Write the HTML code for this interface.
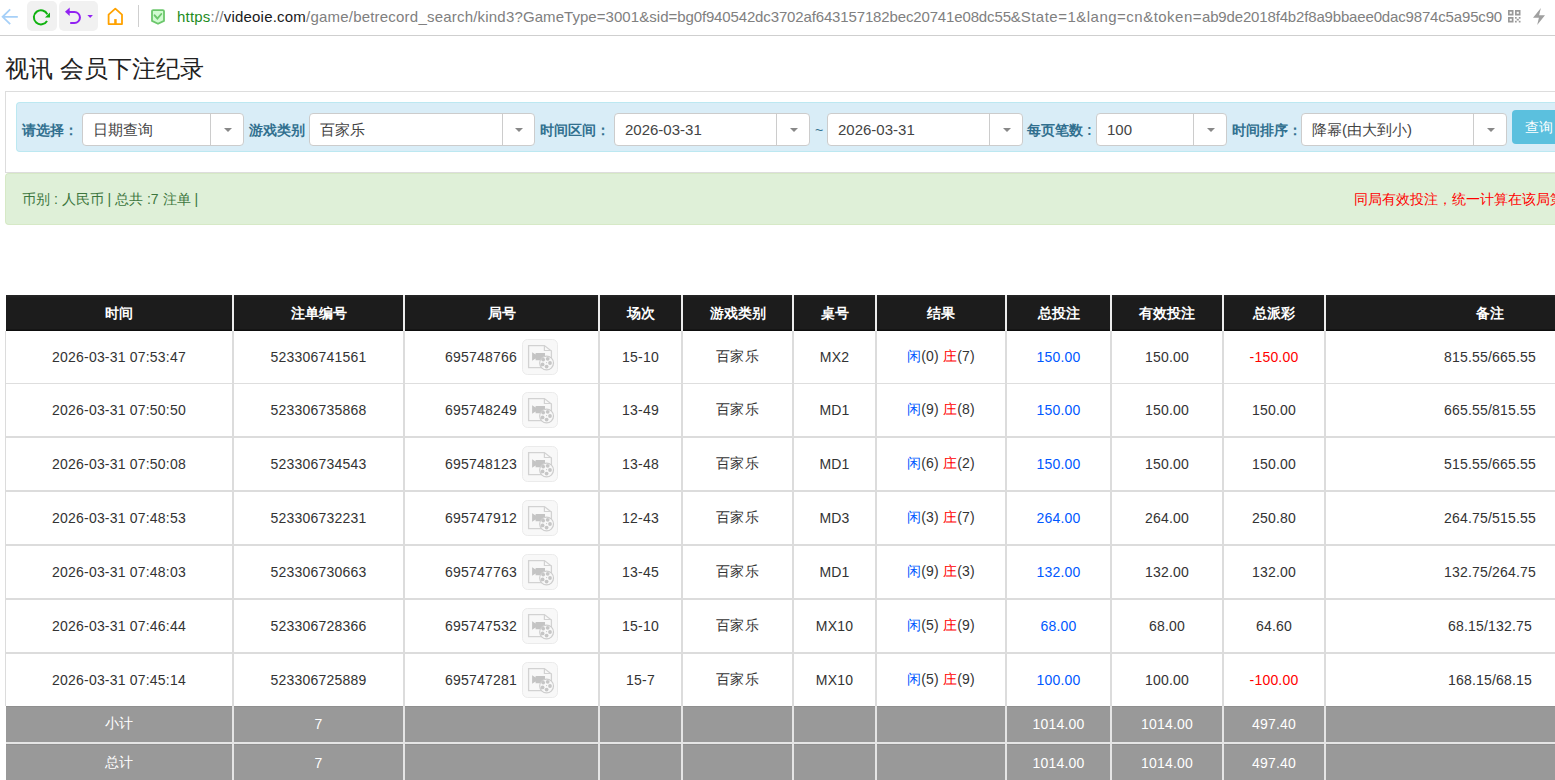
<!DOCTYPE html>
<html><head><meta charset="utf-8">
<style>
*{box-sizing:border-box;}
html,body{margin:0;padding:0;}
body{width:1555px;height:780px;overflow:hidden;position:relative;background:#fff;font-family:"Liberation Sans",sans-serif;color:#333;}
.abs{position:absolute;}
/* toolbar */
#tb{left:0;top:0;width:1555px;height:36px;border-bottom:1px solid #cfcfcf;background:#fff;}
.btnbg{position:absolute;background:#f1f1f1;border-radius:5px;}
#url{position:absolute;left:177px;top:8px;font-size:15px;white-space:nowrap;color:#808080;letter-spacing:0.05px;}
#url>span{position:absolute;top:0;}
#url .g{color:#1e8c1e;}
#url .k{color:#1a1a1a;}
/* title */
#title{left:5px;top:53px;font-size:24px;color:#222;white-space:nowrap;}
/* panel */
#panel{left:5px;top:91px;width:1560px;height:82px;border:1px solid #ddd;border-right:none;background:#fff;}
#bar{left:16px;top:102px;width:1560px;height:50px;background:#d9edf7;border:1px solid #bce8f1;border-right:none;border-radius:4px 0 0 4px;}
.lbl{position:absolute;top:122px;font-size:14px;font-weight:bold;color:#31708f;white-space:nowrap;}
.sel{position:absolute;top:113px;height:33px;background:#fff;border:1px solid #ccc;border-radius:4px;}
.sel .t{position:absolute;left:10px;top:7px;font-size:15px;color:#444;white-space:nowrap;}
.sel .d{position:absolute;top:0;bottom:0;width:1px;background:#ccc;}
.sel .ar{position:absolute;top:14px;width:0;height:0;border-left:4px solid transparent;border-right:4px solid transparent;border-top:4px solid #888;}
#qbtn{left:1512px;top:110px;width:60px;height:34px;background:#5bc0de;border-radius:4px;color:#fff;font-size:14px;}
/* alert */
#alert{left:5px;top:173px;width:1560px;height:52px;background:#dff0d8;border:1px solid #d6e9c6;border-right:none;border-radius:4px 0 0 4px;}
#alert .l{position:absolute;left:16px;top:17px;font-size:14px;color:#3c763d;white-space:nowrap;}
#alert .r{position:absolute;left:1348px;top:17px;font-size:14px;color:#f00;white-space:nowrap;}
/* table */
#tbl{position:absolute;left:6px;top:295px;border-collapse:separate;border-spacing:0;table-layout:fixed;width:1650px;}
#tbl td,#tbl th{text-align:center;padding:0;white-space:nowrap;overflow:hidden;border:0;border-right:2px solid #dcdcdc;}
#tbl th{background:linear-gradient(#262626,#1c1c1c 3px,#1c1c1c 34px,#0e0e0e 35px);color:#fff;font-size:14px;height:36px;border-right-color:#ececec;padding-top:2px;}
#tbl td{font-size:14px;color:#333;height:54px;border-bottom:2px solid #dcdcdc;letter-spacing:0.2px;}
#tbl tr.r1 td{height:53px;border-bottom-width:1px;border-bottom-color:#dedede;}
#tbl tr.r7 td{height:52px;border-bottom:none;}
#tbl td:first-child{box-shadow:-1px 0 0 #dcdcdc;}
#tbl tr.f td{background:#999;box-shadow:inset 0 1px 0 #8f8f8f;color:#fff;height:38px;border-bottom:2px solid #e5e5e5;border-right-color:#e5e5e5;}
#tbl tr.f2 td{height:38px;border-bottom:none;}
.blue{color:#0058ff !important;}
.red{color:#ff0000 !important;}
.jn{position:relative;top:1px;}
.vid{display:inline-block;vertical-align:middle;width:36px;height:36px;margin-left:5px;position:relative;}
</style></head><body>

<div id="tb" class="abs">
  <!-- back arrow -->
  <svg class="abs" style="left:0;top:0" width="24" height="34"><path d="M2.6 16.8H17.8M10.2 9.4L2.6 16.8L10.2 24.2" fill="none" stroke="#a6d0f8" stroke-width="1.8"/></svg>
  <div class="btnbg" style="left:27px;top:1px;width:30px;height:30px"></div>
  <svg class="abs" style="left:27px;top:1px" width="30" height="30"><path d="M20.05 19.95A7.1 7.1 0 1 1 20.4 13.3" fill="none" stroke="#0fb20f" stroke-width="2"/><path d="M23 11.6V16.4H18Z" fill="#0fb20f"/></svg>
  <div class="btnbg" style="left:59px;top:1px;width:39px;height:30px"></div>
  <svg class="abs" style="left:59px;top:1px" width="39" height="30"><path d="M10 11H15.45A5.5 5.5 0 0 1 15.45 22H11.2" fill="none" stroke="#9222f2" stroke-width="2"/><path d="M6 10.8L10.7 6.6V15Z" fill="#9222f2"/><path d="M28.4 14H33.9L31.15 16.9Z" fill="#9222f2"/></svg>
  <svg class="abs" style="left:105px;top:6px" width="22" height="22"><path d="M3.6 18.1V8.6L10.3 2.6L17 8.6V18.1Z" fill="none" stroke="#ffa200" stroke-width="1.8" stroke-linejoin="round"/><rect x="9.2" y="13.1" width="2.5" height="5" fill="#ffa200"/></svg>
  <div class="abs" style="left:138px;top:5px;width:1px;height:22px;background:#cfcfcf"></div>
  <svg class="abs" style="left:149px;top:7px" width="19" height="20"><path d="M4.2 3.1H13.8Q15 3.1 15 4.3V13.9L9 16.8L3 13.9V4.3Q3 3.1 4.2 3.1Z" fill="#d2fbd2" stroke="#6cc76c" stroke-width="1.8" stroke-linejoin="round"/><path d="M5.6 8.3L8.4 11.5L12.3 7" fill="none" stroke="#6cc76c" stroke-width="1.9" stroke-linecap="round"/></svg>
  <div id="url"><span style="left:0;letter-spacing:0.208px"><span class="g">https</span>://<span class="k">videoie.com</span>/game/betrecord_search/kind3?</span><span style="left:346px;letter-spacing:0.05px">GameType=3001&amp;sid=</span><span style="left:500.3px;letter-spacing:-0.142px">bg0f940542dc3702af643157182bec20741e08dc55&amp;</span><span style="left:843.7px;letter-spacing:0.49px">State=1&amp;lang=cn&amp;token=</span><span style="left:1025px;letter-spacing:-0.16px">ab9de2018f4b2f8a9bbaee0dac9874c5a95c90</span></div>
  <svg class="abs" style="left:1506px;top:8px" width="18" height="18"><g fill="#999"><path d="M2 2h5.5v5.5H2zM3.7 3.7v2.1h2.1V3.7z" fill-rule="evenodd"/><path d="M9 2h5.5v5.5H9zM10.7 3.7v2.1h2.1V3.7z" fill-rule="evenodd"/><path d="M2 9h5.5v5.5H2zM3.7 10.7v2.1h2.1v-2.1z" fill-rule="evenodd"/><rect x="9" y="9" width="1.7" height="1.7"/><rect x="12.8" y="9" width="1.7" height="1.7"/><rect x="10.7" y="10.8" width="2.1" height="1.7"/><rect x="9" y="12.8" width="1.7" height="1.7"/><rect x="12.8" y="12.8" width="1.7" height="1.7"/></g></svg>
  <svg class="abs" style="left:1530px;top:6px" width="18" height="22"><path d="M10.9 2.1L3 11.8H8.9L7.2 19L15 9.2H9.1Z" fill="#a0a0a0"/></svg>
</div>

<div id="title" class="abs">视讯 会员下注纪录</div>

<div id="panel" class="abs"></div>
<div id="bar" class="abs"></div>

<div class="lbl" style="left:22px">请选择：</div>
<div class="sel" style="left:82px;width:162px"><span class="t">日期查询</span><span class="d" style="left:127px"></span><span class="ar" style="left:141px"></span></div>
<div class="lbl" style="left:249px">游戏类别</div>
<div class="sel" style="left:309px;width:226px"><span class="t">百家乐</span><span class="d" style="left:192px"></span><span class="ar" style="left:205px"></span></div>
<div class="lbl" style="left:540px">时间区间：</div>
<div class="sel" style="left:614px;width:196px"><span class="t">2026-03-31</span><span class="d" style="left:161px"></span><span class="ar" style="left:175px"></span></div>
<div class="lbl" style="left:815px;font-weight:normal">~</div>
<div class="sel" style="left:827px;width:196px"><span class="t">2026-03-31</span><span class="d" style="left:161px"></span><span class="ar" style="left:175px"></span></div>
<div class="lbl" style="left:1027px">每页笔数 :</div>
<div class="sel" style="left:1096px;width:131px"><span class="t">100</span><span class="d" style="left:96px"></span><span class="ar" style="left:110px"></span></div>
<div class="lbl" style="left:1232px">时间排序：</div>
<div class="sel" style="left:1301px;width:206px"><span class="t">降幂(由大到小)</span><span class="d" style="left:171px"></span><span class="ar" style="left:185px"></span></div>
<div id="qbtn" class="abs"><span style="position:absolute;left:13px;top:9px">查询</span></div>

<div id="alert" class="abs"><span class="l">币别 : 人民币 | 总共 :7 注单 |</span><span class="r">同局有效投注，统一计算在该局第一笔投注</span></div>

<table id="tbl">
<colgroup><col style="width:228px"><col style="width:171px"><col style="width:195px"><col style="width:83px"><col style="width:111px"><col style="width:83px"><col style="width:130px"><col style="width:105px"><col style="width:112px"><col style="width:102px"><col style="width:330px"></colgroup>
<tr><th>时间</th><th>注单编号</th><th>局号</th><th>场次</th><th>游戏类别</th><th>桌号</th><th>结果</th><th>总投注</th><th>有效投注</th><th>总派彩</th><th>备注</th></tr>
<tr class="r1"><td>2026-03-31 07:53:47</td><td>523306741561</td><td><span class="jn">695748766</span><span class="vid"><svg width="36" height="36" viewBox="0 0 36 36" style="display:block"><rect x="0.5" y="0.5" width="35" height="35" rx="5" fill="#f8f8f8" stroke="#ebebeb"/><path d="M6.6 6.6H22.4L29.4 12V28.6H6.6Z" fill="#f8f8f8" stroke="#d2d2d2" stroke-width="1.3"/><path d="M22.4 6.6V11.5H29.4" fill="none" stroke="#d2d2d2" stroke-width="1.2"/><path d="M10.1 13.2L13.6 15.6V14H23V21.2H13.6V19.4L10.1 21.8Z" fill="#c4c4c4"/><circle cx="24.6" cy="24" r="6.9" fill="#f8f8f8" stroke="#cdcdcd" stroke-width="1.2"/><g fill="#c6c6c6"><circle cx="21.2" cy="20.6" r="1.9"/><circle cx="25.7" cy="19.8" r="1.9"/><circle cx="28" cy="24" r="1.9"/><circle cx="24.6" cy="27.6" r="1.9"/><circle cx="20.6" cy="25.4" r="1.9"/><circle cx="24.6" cy="23.6" r="0.6"/></g></svg></span></td><td>15-10</td><td>百家乐</td><td>MX2</td><td><span class="blue">闲</span>(0) <span class="red">庄</span>(7)</td><td class="blue">150.00</td><td>150.00</td><td class="red">-150.00</td><td>815.55/665.55</td></tr>
<tr><td>2026-03-31 07:50:50</td><td>523306735868</td><td><span class="jn">695748249</span><span class="vid"><svg width="36" height="36" viewBox="0 0 36 36" style="display:block"><rect x="0.5" y="0.5" width="35" height="35" rx="5" fill="#f8f8f8" stroke="#ebebeb"/><path d="M6.6 6.6H22.4L29.4 12V28.6H6.6Z" fill="#f8f8f8" stroke="#d2d2d2" stroke-width="1.3"/><path d="M22.4 6.6V11.5H29.4" fill="none" stroke="#d2d2d2" stroke-width="1.2"/><path d="M10.1 13.2L13.6 15.6V14H23V21.2H13.6V19.4L10.1 21.8Z" fill="#c4c4c4"/><circle cx="24.6" cy="24" r="6.9" fill="#f8f8f8" stroke="#cdcdcd" stroke-width="1.2"/><g fill="#c6c6c6"><circle cx="21.2" cy="20.6" r="1.9"/><circle cx="25.7" cy="19.8" r="1.9"/><circle cx="28" cy="24" r="1.9"/><circle cx="24.6" cy="27.6" r="1.9"/><circle cx="20.6" cy="25.4" r="1.9"/><circle cx="24.6" cy="23.6" r="0.6"/></g></svg></span></td><td>13-49</td><td>百家乐</td><td>MD1</td><td><span class="blue">闲</span>(9) <span class="red">庄</span>(8)</td><td class="blue">150.00</td><td>150.00</td><td>150.00</td><td>665.55/815.55</td></tr>
<tr><td>2026-03-31 07:50:08</td><td>523306734543</td><td><span class="jn">695748123</span><span class="vid"><svg width="36" height="36" viewBox="0 0 36 36" style="display:block"><rect x="0.5" y="0.5" width="35" height="35" rx="5" fill="#f8f8f8" stroke="#ebebeb"/><path d="M6.6 6.6H22.4L29.4 12V28.6H6.6Z" fill="#f8f8f8" stroke="#d2d2d2" stroke-width="1.3"/><path d="M22.4 6.6V11.5H29.4" fill="none" stroke="#d2d2d2" stroke-width="1.2"/><path d="M10.1 13.2L13.6 15.6V14H23V21.2H13.6V19.4L10.1 21.8Z" fill="#c4c4c4"/><circle cx="24.6" cy="24" r="6.9" fill="#f8f8f8" stroke="#cdcdcd" stroke-width="1.2"/><g fill="#c6c6c6"><circle cx="21.2" cy="20.6" r="1.9"/><circle cx="25.7" cy="19.8" r="1.9"/><circle cx="28" cy="24" r="1.9"/><circle cx="24.6" cy="27.6" r="1.9"/><circle cx="20.6" cy="25.4" r="1.9"/><circle cx="24.6" cy="23.6" r="0.6"/></g></svg></span></td><td>13-48</td><td>百家乐</td><td>MD1</td><td><span class="blue">闲</span>(6) <span class="red">庄</span>(2)</td><td class="blue">150.00</td><td>150.00</td><td>150.00</td><td>515.55/665.55</td></tr>
<tr><td>2026-03-31 07:48:53</td><td>523306732231</td><td><span class="jn">695747912</span><span class="vid"><svg width="36" height="36" viewBox="0 0 36 36" style="display:block"><rect x="0.5" y="0.5" width="35" height="35" rx="5" fill="#f8f8f8" stroke="#ebebeb"/><path d="M6.6 6.6H22.4L29.4 12V28.6H6.6Z" fill="#f8f8f8" stroke="#d2d2d2" stroke-width="1.3"/><path d="M22.4 6.6V11.5H29.4" fill="none" stroke="#d2d2d2" stroke-width="1.2"/><path d="M10.1 13.2L13.6 15.6V14H23V21.2H13.6V19.4L10.1 21.8Z" fill="#c4c4c4"/><circle cx="24.6" cy="24" r="6.9" fill="#f8f8f8" stroke="#cdcdcd" stroke-width="1.2"/><g fill="#c6c6c6"><circle cx="21.2" cy="20.6" r="1.9"/><circle cx="25.7" cy="19.8" r="1.9"/><circle cx="28" cy="24" r="1.9"/><circle cx="24.6" cy="27.6" r="1.9"/><circle cx="20.6" cy="25.4" r="1.9"/><circle cx="24.6" cy="23.6" r="0.6"/></g></svg></span></td><td>12-43</td><td>百家乐</td><td>MD3</td><td><span class="blue">闲</span>(3) <span class="red">庄</span>(7)</td><td class="blue">264.00</td><td>264.00</td><td>250.80</td><td>264.75/515.55</td></tr>
<tr><td>2026-03-31 07:48:03</td><td>523306730663</td><td><span class="jn">695747763</span><span class="vid"><svg width="36" height="36" viewBox="0 0 36 36" style="display:block"><rect x="0.5" y="0.5" width="35" height="35" rx="5" fill="#f8f8f8" stroke="#ebebeb"/><path d="M6.6 6.6H22.4L29.4 12V28.6H6.6Z" fill="#f8f8f8" stroke="#d2d2d2" stroke-width="1.3"/><path d="M22.4 6.6V11.5H29.4" fill="none" stroke="#d2d2d2" stroke-width="1.2"/><path d="M10.1 13.2L13.6 15.6V14H23V21.2H13.6V19.4L10.1 21.8Z" fill="#c4c4c4"/><circle cx="24.6" cy="24" r="6.9" fill="#f8f8f8" stroke="#cdcdcd" stroke-width="1.2"/><g fill="#c6c6c6"><circle cx="21.2" cy="20.6" r="1.9"/><circle cx="25.7" cy="19.8" r="1.9"/><circle cx="28" cy="24" r="1.9"/><circle cx="24.6" cy="27.6" r="1.9"/><circle cx="20.6" cy="25.4" r="1.9"/><circle cx="24.6" cy="23.6" r="0.6"/></g></svg></span></td><td>13-45</td><td>百家乐</td><td>MD1</td><td><span class="blue">闲</span>(9) <span class="red">庄</span>(3)</td><td class="blue">132.00</td><td>132.00</td><td>132.00</td><td>132.75/264.75</td></tr>
<tr><td>2026-03-31 07:46:44</td><td>523306728366</td><td><span class="jn">695747532</span><span class="vid"><svg width="36" height="36" viewBox="0 0 36 36" style="display:block"><rect x="0.5" y="0.5" width="35" height="35" rx="5" fill="#f8f8f8" stroke="#ebebeb"/><path d="M6.6 6.6H22.4L29.4 12V28.6H6.6Z" fill="#f8f8f8" stroke="#d2d2d2" stroke-width="1.3"/><path d="M22.4 6.6V11.5H29.4" fill="none" stroke="#d2d2d2" stroke-width="1.2"/><path d="M10.1 13.2L13.6 15.6V14H23V21.2H13.6V19.4L10.1 21.8Z" fill="#c4c4c4"/><circle cx="24.6" cy="24" r="6.9" fill="#f8f8f8" stroke="#cdcdcd" stroke-width="1.2"/><g fill="#c6c6c6"><circle cx="21.2" cy="20.6" r="1.9"/><circle cx="25.7" cy="19.8" r="1.9"/><circle cx="28" cy="24" r="1.9"/><circle cx="24.6" cy="27.6" r="1.9"/><circle cx="20.6" cy="25.4" r="1.9"/><circle cx="24.6" cy="23.6" r="0.6"/></g></svg></span></td><td>15-10</td><td>百家乐</td><td>MX10</td><td><span class="blue">闲</span>(5) <span class="red">庄</span>(9)</td><td class="blue">68.00</td><td>68.00</td><td>64.60</td><td>68.15/132.75</td></tr>
<tr class="r7"><td>2026-03-31 07:45:14</td><td>523306725889</td><td><span class="jn">695747281</span><span class="vid"><svg width="36" height="36" viewBox="0 0 36 36" style="display:block"><rect x="0.5" y="0.5" width="35" height="35" rx="5" fill="#f8f8f8" stroke="#ebebeb"/><path d="M6.6 6.6H22.4L29.4 12V28.6H6.6Z" fill="#f8f8f8" stroke="#d2d2d2" stroke-width="1.3"/><path d="M22.4 6.6V11.5H29.4" fill="none" stroke="#d2d2d2" stroke-width="1.2"/><path d="M10.1 13.2L13.6 15.6V14H23V21.2H13.6V19.4L10.1 21.8Z" fill="#c4c4c4"/><circle cx="24.6" cy="24" r="6.9" fill="#f8f8f8" stroke="#cdcdcd" stroke-width="1.2"/><g fill="#c6c6c6"><circle cx="21.2" cy="20.6" r="1.9"/><circle cx="25.7" cy="19.8" r="1.9"/><circle cx="28" cy="24" r="1.9"/><circle cx="24.6" cy="27.6" r="1.9"/><circle cx="20.6" cy="25.4" r="1.9"/><circle cx="24.6" cy="23.6" r="0.6"/></g></svg></span></td><td>15-7</td><td>百家乐</td><td>MX10</td><td><span class="blue">闲</span>(5) <span class="red">庄</span>(9)</td><td class="blue">100.00</td><td>100.00</td><td class="red">-100.00</td><td>168.15/68.15</td></tr>
<tr class="f"><td>小计</td><td>7</td><td></td><td></td><td></td><td></td><td></td><td>1014.00</td><td>1014.00</td><td>497.40</td><td></td></tr>
<tr class="f f2"><td>总计</td><td>7</td><td></td><td></td><td></td><td></td><td></td><td>1014.00</td><td>1014.00</td><td>497.40</td><td></td></tr>
</table>

</body></html>
